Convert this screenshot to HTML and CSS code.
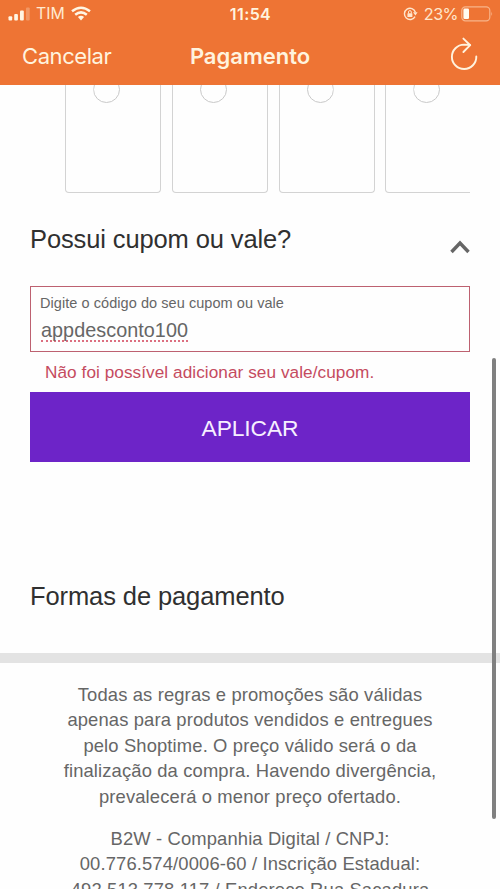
FILE: index.html
```html
<!DOCTYPE html>
<html lang="pt-BR">
<head>
<meta charset="utf-8">
<title>Pagamento</title>
<link rel="stylesheet" href="styles.css">
</head>
<body>
<div class="screen">
  <header class="top">
    <div class="status">
      <div class="status-left">
        <svg class="signal" width="23" height="14" viewBox="0 0 23 14" fill="#fff6e4">
          <rect x="0.5" y="9.3" width="3.7" height="4.2" rx="1"/>
          <rect x="6.2" y="7" width="3.7" height="6.5" rx="1"/>
          <rect x="12" y="3.6" width="3.8" height="9.9" rx="1"/>
          <rect x="18" y="0.4" width="3.7" height="13.1" rx="1" opacity=".28"/>
        </svg>
        <span class="carrier">TIM</span>
        <svg class="wifi" width="20" height="15" viewBox="0 0 20 15" fill="none" stroke="#fff6e4" stroke-width="2.5">
          <path d="M1 5.3Q10-1.9 19 5.3"/>
          <path d="M4.2 8.8Q10 4 15.8 8.8"/>
          <path d="M6.9 11.1Q10 8.4 13.1 11.1L10 14.5Z" fill="#fff6e4" stroke="none"/>
        </svg>
      </div>
      <span class="clock">11:54</span>
      <div class="status-right">
        <svg class="lock" width="15" height="14" viewBox="0 0 15 14" fill="none" stroke="#ffe6cc" stroke-width="1.4">
          <path d="M12 9.6A5.6 5.6 0 1 1 12.4 5.2"/>
          <path d="M10 5.2h4.6L12.4 8.6Z" fill="#ffe6cc" stroke="none"/>
          <rect x="4.4" y="6.2" width="5" height="3.8" rx=".6" fill="#ffe6cc" stroke="none"/>
          <path d="M5.5 6.5V5a1.4 1.4 0 0 1 2.8 0v1.5" stroke-width="1"/>
        </svg>
        <span class="percent">23%</span>
        <svg class="battery" width="32" height="16" viewBox="0 0 32 16" fill="none">
          <rect x="0.8" y="0.8" width="28" height="14" rx="3.6" stroke="#f8b489" stroke-width="1.2"/>
          <rect x="2.4" y="2.6" width="5.6" height="10.4" rx="1.3" fill="#fffaf0"/>
          <path d="M30.3 5.5q1.6 2.3 0 4.6Z" fill="#f8b489"/>
        </svg>
      </div>
    </div>
    <nav class="nav">
      <span class="cancel">Cancelar</span>
      <h1 class="title">Pagamento</h1>
      <svg class="reload" width="28" height="34" viewBox="0 0 28 34" fill="none" stroke="#fff3de" stroke-width="1.9" stroke-linecap="round" stroke-linejoin="round">
        <path d="M26.3 19.5A12.2 12.2 0 1 1 14.1 7.6L20 8"/>
        <path d="M13.4 1.6L20.2 8.2L13.4 15"/>
      </svg>
    </nav>
  </header>

  <main class="content">
    <div class="carousel">
      <div class="card"><span class="radio"></span></div>
      <div class="card"><span class="radio"></span></div>
      <div class="card"><span class="radio"></span></div>
      <div class="card"><span class="radio"></span></div>
    </div>

    <section class="coupon">
      <div class="coupon-head">
        <h2 class="heading question">Possui cupom ou vale?</h2>
        <svg class="chevron" width="20" height="14" viewBox="0 0 20 14" fill="none" stroke="#666" stroke-width="3.4">
          <path d="M1.5 12L10 3L18.5 12"/>
        </svg>
      </div>
      <div class="field">
        <span class="label">Digite o código do seu cupom ou vale</span>
        <span class="value">appdesconto100</span>
      </div>
      <p class="error">Não foi possível adicionar seu vale/cupom.</p>
      <button class="apply"><span>APLICAR</span></button>
    </section>

    <section class="payment">
      <h2 class="heading forms">Formas de pagamento</h2>
    </section>

    <footer class="legal">
      <p>Todas as regras e promoções são válidas<br>apenas para produtos vendidos e entregues<br>pelo Shoptime. O preço válido será o da<br>finalização da compra. Havendo divergência,<br>prevalecerá o menor preço ofertado.</p>
      <p>B2W - Companhia Digital / CNPJ:<br>00.776.574/0006-60 / Inscrição Estadual:<br>492.513.778.117 / Endereço Rua Sacadura</p>
    </footer>
  </main>
  <div class="scrollbar"></div>
</div>
</body>
</html>
```

FILE: styles.css
```css
* { box-sizing: border-box; }
body, h1, h2, p { margin: 0; }
h1, h2 { font-weight: 400; }
body {
  background: #fefefe;
  font-family: "Liberation Sans", Arial, sans-serif;
  overflow: hidden;
}
svg { display: block; flex: none; }
.screen {
  position: relative;
  width: 500px;
  height: 889px;
  overflow: hidden;
}
.top {
  height: 85px;
  background: #ee7434;
  color: #fff3de;
  font-family: Inter, sans-serif;
}
.status {
  height: 27px;
  display: grid;
  grid-template-columns: 1fr auto 1fr;
  align-items: center;
  padding: 0 7px 0 8px;
}
.status-left, .status-right { display: flex; align-items: center; }
.status-right { justify-content: flex-end; }
.carrier { font-size: 15.8px; line-height: 20px; margin: 0 6px 0 5px; color: #ffe9d0; }
.clock { font-size: 16px; line-height: 20px; font-weight: 600; letter-spacing: .4px; }
.percent { font-size: 16.3px; line-height: 20px; letter-spacing: -.6px; margin: 0 3px 0 6px; color: #ffe6cc; }
.nav {
  height: 57px;
  display: grid;
  grid-template-columns: 1fr auto 1fr;
  align-items: center;
  padding: 0 22px 0 22px;
}
.cancel { font-size: 22px; line-height: 28px; letter-spacing: -.42px; }
.title { font-size: 22px; line-height: 28px; font-weight: 600; }
.reload { justify-self: end; margin-top: -3px; }

.content { padding: 0 30px; }
.carousel {
  height: 108px;
  display: flex;
  gap: 10.7px;
  padding-left: 35.3px;
  overflow: hidden;
}
.card {
  flex: 0 0 96px;
  height: 108px;
  border: 1.5px solid #d3d3d3;
  border-top: 0;
  border-radius: 0 0 4px 4px;
  display: flex;
  padding-left: 27px;
}
.radio {
  width: 27px;
  height: 27px;
  margin-top: -9px;
  border: 1.5px solid #c8c8c8;
  border-radius: 50%;
  clip-path: inset(9px 0 0 0);
}
.coupon-head {
  height: 93px;
  display: flex;
  justify-content: space-between;
  align-items: flex-start;
}
.heading { color: #303030; font-size: 25.5px; line-height: 32px; white-space: nowrap; }
.question { margin-top: 30px; letter-spacing: -.12px; }
.forms { letter-spacing: -.1px; }
.chevron { margin-top: 47px; }
.field {
  height: 66px;
  border: 1.5px solid #bd6170;
  padding: 7px 9px;
  display: flex;
  flex-direction: column;
  align-items: flex-start;
}
.label { font-size: 14.5px; line-height: 18px; letter-spacing: .06px; color: #666; white-space: nowrap; }
.value {
  font-size: 19.8px;
  line-height: 22px;
  height: 23px;
  margin: 7px 0 0 1px;
  color: #666;
  letter-spacing: .05px;
  border-bottom: 2px dotted #dc6f80;
}
.error {
  font-size: 17.2px;
  line-height: 20px;
  margin: 10px 0 0 15px;
  color: #c54b60;
  letter-spacing: .06px;
  white-space: nowrap;
}
.apply {
  display: block;
  width: 100%;
  height: 70px;
  margin-top: 10px;
  padding: 1px 0 0;
  border: 0;
  background: #6d24c8;
  color: #f6efff;
  font: 22.8px/28px "Liberation Sans", Arial, sans-serif;
  letter-spacing: -.1px;
}
.payment { padding-top: 118px; height: 190.5px; }
.legal {
  margin: 0 -30px;
  border-top: 10px solid #e3e3e3;
  padding-top: 19.5px;
  text-align: center;
  font-size: 18.4px;
  line-height: 25.4px;
  letter-spacing: .13px;
  color: #666;
  white-space: nowrap;
}
.legal p + p { margin-top: 17px; }
.scrollbar {
  position: absolute;
  left: 492px;
  top: 358px;
  width: 4px;
  height: 461px;
  border-radius: 2px;
  background: #808080;
}
```
